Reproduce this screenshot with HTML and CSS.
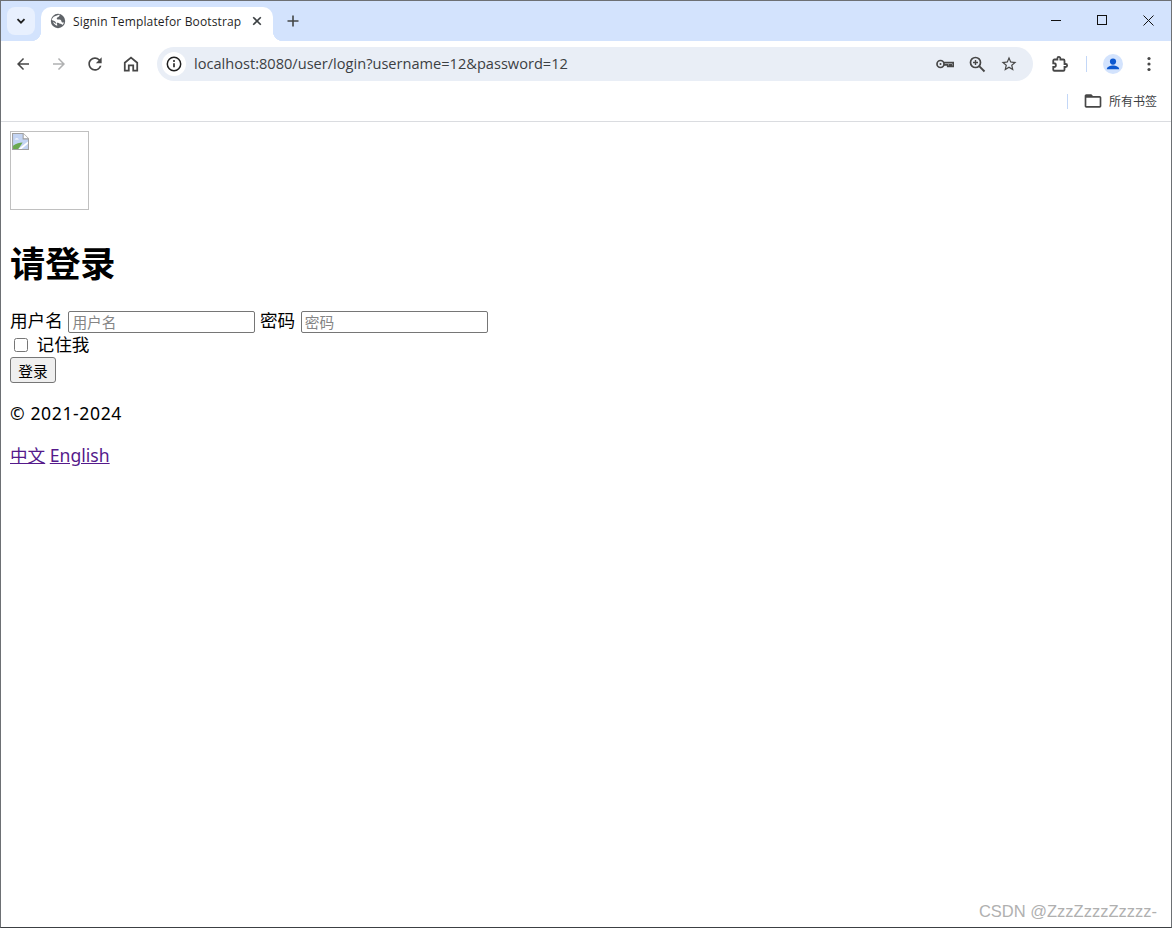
FILE: index.html
```html
<!DOCTYPE html>
<html lang="zh-CN">
<head>
    <meta charset="UTF-8">
    <meta name="viewport" content="width=device-width, initial-scale=1.0">
    <title>Signin Templatefor Bootstrap</title>
    <link rel="stylesheet" href="styles.css">
</head>
<body>
    <div class="window">
        <div class="tabstrip">
            <button class="tab-search" type="button">
                <svg width="12" height="12" viewBox="0 0 12 12"><path d="M2.5 4.2 6 7.7l3.5-3.5" fill="none" stroke="#1f1f1f" stroke-width="1.8"/></svg>
            </button>
            <div class="tab">
                <svg class="tab-icon" width="16" height="16" viewBox="0 0 16 16"><circle cx="8" cy="8" r="7.200" fill="#5f6368"/><path d="M9.500 1.600c.3 1.200-.2 2-1.200 2.300-1 .3-1.700.9-1.500 1.800.2.800 1.300.8 2.300.8 1.300 0 2.200.6 2.300 1.700.1.900.7 1.400 1.600 1.400l1-.2c-.3 1-1 2-1.800 2.600-.4-1-1.300-1.400-2.400-1.300-.7-1-1.900-1.300-3-.9l.4 2.200.1.800c-2-.4-3.700-2-4.300-4l3.300 2.200c-.1-1.500-.8-2.500-2-3.100L1.700 7.100C2 5.800 2.700 4.600 3.700 3.700" fill="#fff"/></svg>
                <span class="tab-title">Signin Templatefor Bootstrap</span>
                <svg width="10" height="10" viewBox="0 0 10 10"><path d="M1.2 1.2l7.600 7.600M8.800 1.200 1.200 8.800" stroke="#3c4043" stroke-width="1.600" fill="none"/></svg>
            </div>
            <div class="new-tab">
                <svg width="12" height="12" viewBox="0 0 12 12"><path d="M6 .5v11M.5 6h11" stroke="#444746" stroke-width="1.600" fill="none"/></svg>
            </div>
            <div class="win-controls">
                <div class="win-btn"><svg width="10" height="10" viewBox="0 0 10 10"><path d="M0 5.500h10" stroke="#111" fill="none"/></svg></div>
                <div class="win-btn"><svg width="10" height="10" viewBox="0 0 10 10"><rect x=".5" y=".5" width="9" height="9" stroke="#111" fill="none"/></svg></div>
                <div class="win-btn"><svg width="11" height="11" viewBox="0 0 11 11"><path d="M.5.5l10 10M10.500.5l-10 10" stroke="#111" fill="none"/></svg></div>
            </div>
        </div>

        <div class="toolbar">
            <div class="tool-btn"><svg width="18" height="18" viewBox="0 0 24 24"><path fill="#474747" d="M20 11H7.830l5.590-5.590L12 4l-8 8 8 8 1.410-1.410L7.830 13H20v-2z"/></svg></div>
            <div class="tool-btn"><svg width="18" height="18" viewBox="0 0 24 24"><path fill="#b0b1b2" d="M12 4l-1.410 1.410L16.170 11H4v2h12.170l-5.580 5.590L12 20l8-8z"/></svg></div>
            <div class="tool-btn"><svg width="20" height="20" viewBox="0 0 24 24"><path fill="#474747" d="M17.650 6.350A7.958 7.958 0 0 0 12 4c-4.420 0-7.990 3.580-7.990 8s3.570 8 7.990 8c3.730 0 6.840-2.550 7.730-6h-2.080A5.990 5.990 0 0 1 12 18c-3.310 0-6-2.690-6-6s2.690-6 6-6c1.660 0 3.140.69 4.220 1.780L13 11h7V4l-2.350 2.350z"/></svg></div>
            <div class="tool-btn"><svg width="16" height="16" viewBox="0 0 18 18"><path fill="none" stroke="#474747" stroke-width="2" d="M2 16.500V7.600L9 1.800l7 5.800v8.900h-4.500v-6h-5v6z"/></svg></div>

            <div class="omnibox">
                <div class="site-info">
                    <svg width="16" height="16" viewBox="0 0 16 16"><circle cx="8" cy="8" r="6.700" fill="none" stroke="#1f1f1f" stroke-width="1.500"/><path d="M8 7.200v4" stroke="#1f1f1f" stroke-width="1.600"/><circle cx="8" cy="5" r="1" fill="#1f1f1f"/></svg>
                </div>
                <span class="url">localhost:8080/user/login?username=12&amp;password=12</span>
                <div class="omni-icons">
                    <svg class="key-icon" width="20" height="20" viewBox="0 0 20 20"><circle cx="5.500" cy="10" r="3.500" fill="none" stroke="#474747" stroke-width="1.700"/><circle cx="5.500" cy="10" r="1" fill="#474747"/><path d="M9 8.600h9.200v3.800h-2v-1.500h-1.500v1.500h-2v-1.500H9" fill="none" stroke="#474747" stroke-width="1.600"/></svg>
                    <svg width="18" height="18" viewBox="0 0 18 18"><circle cx="7.500" cy="7.500" r="5" fill="none" stroke="#474747" stroke-width="1.700"/><path d="M11.200 11.200l5.300 5.300" stroke="#474747" stroke-width="1.900"/><path d="M7.500 5v5M5 7.500h5" stroke="#474747" stroke-width="1.400"/></svg>
                    <svg width="18" height="18" viewBox="0 0 24 24"><path fill="#474747" d="M22 9.240l-7.190-.62L12 2 9.190 8.630 2 9.240l5.460 4.730L5.820 21 12 17.270 18.180 21l-1.630-7.030L22 9.240zM12 15.400l-3.760 2.270 1-4.280-3.320-2.880 4.380-.38L12 6.100l1.710 4.040 4.380.38-3.320 2.880 1 4.280L12 15.400z"/></svg>
                </div>
            </div>

            <div class="tool-btn"><svg width="18" height="18" viewBox="0 0 24 24"><path fill="none" stroke="#474747" stroke-width="2.400" d="M19.500 12H18V7.500c0-.8-.7-1.500-1.500-1.500H12.500V4.500a2 2 0 0 0-4 0V6H4.500C3.700 6 3 6.700 3 7.500V11h1a2.500 2.500 0 0 1 0 5H3v3.500c0 .8.7 1.500 1.500 1.500h12c.8 0 1.500-.7 1.500-1.500V16h1.500a2 2 0 0 0 0-4z"/></svg></div>
            <div class="tool-sep"></div>
            <div class="tool-btn">
                <svg width="20" height="20" viewBox="0 0 20 20"><circle cx="10" cy="10" r="10" fill="#d3e3fd"/><circle cx="10" cy="7.600" r="3.100" fill="#0b57d0"/><path d="M3.800 15.300c0-2.600 3.600-3.800 6.200-3.800s6.200 1.200 6.200 3.800z" fill="#0b57d0"/></svg>
            </div>
            <div class="tool-btn"><svg width="16" height="16" viewBox="0 0 16 16"><circle cx="8" cy="2.500" r="1.600" fill="#474747"/><circle cx="8" cy="8" r="1.600" fill="#474747"/><circle cx="8" cy="13.500" r="1.600" fill="#474747"/></svg></div>
        </div>

        <div class="bookmarks">
            <div class="bookmark-sep"></div>
            <svg class="folder" width="20" height="20" viewBox="0 0 24 24"><path fill="#474747" d="M20 6h-8l-2-2H4c-1.100 0-1.990.9-1.990 2L2 18c0 1.100.9 2 2 2h16c1.100 0 2-.9 2-2V8c0-1.100-.9-2-2-2zm0 12H4V8h16v10z"/></svg>
            <span class="bookmark-label">所有书签</span>
        </div>

        <main class="page">
            <form class="form-signin">
                <span class="broken-img">
                    <svg width="17" height="17" viewBox="0 0 16 16"><path d="M.5.5h10l5 5v10H.5z" fill="#c3d4f3" stroke="#a0a0a0"/><path d="M10.500.5v5h5" fill="#fff" stroke="#a0a0a0"/><path d="M1 15v-3c3-2 6-3 9-3l-4 6z" fill="#6aa84f"/><path d="M2.500 6c1-1.500 3-1.500 4 0z" fill="#fff"/><path d="M6 15l9-7v2l-6 5z" fill="#fff"/></svg>
                </span>
                <h1 class="form-title">请登录</h1>
                <div class="fields">
                    <label>用户名</label>
                    <input class="field" type="text" placeholder="用户名">
                    <label>密码</label>
                    <input class="field" type="password" placeholder="密码">
                </div>
                <div class="remember">
                    <label><input class="check" type="checkbox"> 记住我</label>
                </div>
                <button class="submit" type="submit">登录</button>
                <p class="copy">© 2021-2024</p>
                <p class="langs"><a href="#zh">中文</a> <a href="#en">English</a></p>
            </form>
        </main>

        <div class="watermark">CSDN @ZzzZzzzZzzzz-</div>
    </div>
</body>
</html>
```

FILE: styles.css
```css
:root {
    --strip-color: #d3e3fd;
    --ui-font: "Open Sans", "Noto Sans CJK SC", sans-serif;
    --page-font: "Noto Sans", "Noto Sans CJK SC", sans-serif;
}
html, body {
    margin: 0;
    padding: 0;
    background: #fff;
}
.window {
    position: relative;
    box-sizing: border-box;
    width: 1172px;
    height: 928px;
    border: 1px solid #6d7074;
    border-bottom-color: #3c4043;
    overflow: hidden;
    display: flex;
    flex-direction: column;
    font-family: var(--ui-font);
}

/* tab strip */
.tabstrip {
    display: flex;
    align-items: flex-end;
    height: 40px;
    flex: none;
    background: var(--strip-color);
}
.tab-search {
    width: 28px;
    height: 28px;
    margin: 0 6px 6px 6px;
    padding: 0;
    border: 0;
    border-radius: 8px;
    background: #e8f0fe;
    display: flex;
    align-items: center;
    justify-content: center;
}
.tab {
    position: relative;
    width: 232px;
    height: 34px;
    box-sizing: border-box;
    padding: 0 11px 6px 9px;
    background: #fff;
    border-radius: 10px 10px 0 0;
    display: flex;
    align-items: center;
    gap: 7px;
}
.tab::before, .tab::after {
    content: "";
    position: absolute;
    bottom: 0;
    width: 10px;
    height: 10px;
    background: #fff;
}
.tab::before {
    left: -10px;
    -webkit-mask: radial-gradient(circle at 0 0, transparent 10px, #000 10.5px);
    mask: radial-gradient(circle at 0 0, transparent 10px, #000 10.5px);
}
.tab::after {
    right: -10px;
    -webkit-mask: radial-gradient(circle at 100% 0, transparent 10px, #000 10.5px);
    mask: radial-gradient(circle at 100% 0, transparent 10px, #000 10.5px);
}
.tab-icon {
    flex: none;
}
.tab-title {
    flex: 1;
    font-size: 12px;
    letter-spacing: .15px;
    color: #1f1f1f;
    white-space: nowrap;
    overflow: hidden;
}
.new-tab {
    width: 28px;
    height: 28px;
    margin: 0 0 6px 6px;
    display: flex;
    align-items: center;
    justify-content: center;
}
.win-controls {
    display: flex;
    margin-left: auto;
    align-self: flex-start;
}
.win-btn {
    width: 46px;
    height: 38px;
    display: flex;
    align-items: center;
    justify-content: center;
}

/* toolbar */
.toolbar {
    display: flex;
    align-items: center;
    height: 45px;
    flex: none;
    box-sizing: border-box;
    padding: 1px 4px 0 4px;
    background: #fff;
    border-radius: 10px 10px 0 0;
    position: relative;
}
.tool-btn {
    width: 36px;
    height: 34px;
    flex: none;
    display: flex;
    align-items: center;
    justify-content: center;
}
.omnibox {
    flex: 1;
    height: 34px;
    margin: 0 9px 0 8px;
    padding: 0 15px 0 5px;
    background: #e9eef6;
    border-radius: 17px;
    display: flex;
    align-items: center;
}
.site-info {
    width: 24px;
    height: 24px;
    border-radius: 50%;
    background: #fff;
    display: flex;
    align-items: center;
    justify-content: center;
}
.url {
    margin-left: 8px;
    padding-bottom: 2px;
    font-size: 14.6px;
    color: #3c4043;
    white-space: nowrap;
}
.omni-icons {
    margin-left: auto;
    display: flex;
    align-items: center;
    gap: 14px;
}
.key-icon {
    margin-right: -1px;
}
.tool-sep {
    width: 1px;
    height: 16px;
    margin: 0 8px 0 8px;
    background: #c3d7f7;
}

/* bookmark bar */
.bookmarks {
    display: flex;
    align-items: center;
    justify-content: flex-end;
    height: 36px;
    flex: none;
    box-sizing: border-box;
    padding: 0 14px 5px 0;
    border-bottom: 1px solid #dadce0;
}
.bookmark-sep {
    width: 1px;
    height: 15px;
    margin-right: 15px;
    background: #c3d7f7;
}
.folder {
    margin-right: 6px;
}
.bookmark-label {
    font-size: 12px;
    color: #3c4043;
}

/* page, browser zoom 110% */
.page {
    flex: 1;
    padding: 9px 9px 0 9px;
    font-family: var(--page-font);
    font-size: 17.6px;
    line-height: 23px;
    color: #000;
}
.broken-img {
    box-sizing: border-box;
    display: block;
    width: 79px;
    height: 79px;
    padding: 1px;
    border: 1px solid #c0c0c0;
}
.broken-img svg {
    display: block;
}
.form-title {
    height: 64px;
    margin: 21px 0 14px 0;
    font-size: 35.2px;
    line-height: 64px;
    font-weight: 700;
}
.fields {
    height: 23px;
}
.field {
    box-sizing: border-box;
    width: 187px;
    height: 22px;
    margin: 0 0 0 1px;
    padding: 1px 3px;
    border: 1px solid #767676;
    border-radius: 2px;
    font-family: var(--page-font);
    font-size: 14.7px;
    vertical-align: -1px;
    outline: none;
}
.field::placeholder {
    color: #858585;
}
.remember {
    height: 24px;
    padding-top: 1px;
}
.check {
    width: 14px;
    height: 14px;
    margin: 4px;
    vertical-align: -1px;
}
.submit {
    display: block;
    box-sizing: border-box;
    width: 46px;
    height: 26px;
    padding: 0;
    border: 1px solid #767676;
    border-radius: 3px;
    background: #efefef;
    font-family: var(--page-font);
    font-size: 14.7px;
    color: #000;
}
.copy, .langs {
    margin: 19px 0;
}
.copy {
    letter-spacing: .6px;
}
.langs a {
    color: #551a8b;
}
.watermark {
    position: absolute;
    right: 14px;
    bottom: 6px;
    font-family: "Liberation Sans", sans-serif;
    font-size: 16.5px;
    color: #b0b0b0;
}
```
